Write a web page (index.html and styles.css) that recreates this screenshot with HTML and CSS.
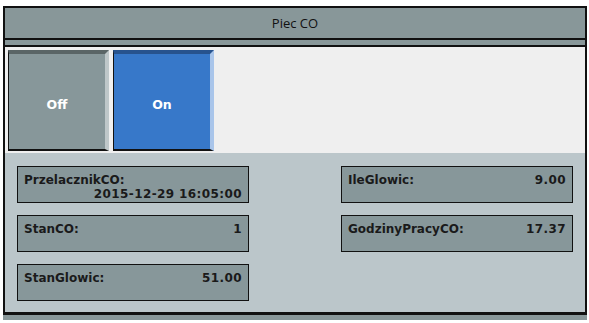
FILE: index.html
```html
<!doctype html>
<html lang="pl">
<head>
  <meta charset="utf-8"/>
  <title>Piec CO</title>
  <link rel="stylesheet" href="styles.css">
</head>
<body>
<div class="frame">
  <div class="header">Piec CO</div>
  <div class="strip"></div>
  <div class="switches">
    <button class="sw sw-off">Off</button>
    <button class="sw sw-on">On</button>
  </div>
  <div class="values">
    <div class="item"><span class="label">PrzelacznikCO:</span><span class="val">2015-12-29 16:05:00</span></div>
    <div class="item"><span class="label">IleGlowic:</span><span class="val">9.00</span></div>
    <div class="item"><span class="label">StanCO:</span><span class="val">1</span></div>
    <div class="item"><span class="label">GodzinyPracyCO:</span><span class="val">17.37</span></div>
    <div class="item"><span class="label">StanGlowic:</span><span class="val">51.00</span></div>
  </div>
</div>
<div class="footer"></div>
</body>
</html>
```

FILE: styles.css
```css
:root{
  --gray:#889799;--light:#efefef;--panel:#bbc6ca;--line:#111;
}
body{margin:0;background:#fff;font-family:'DejaVu Sans',Verdana,sans-serif;color:#1a1a1a}
.frame{width:584px;box-sizing:border-box;margin:6px 0 0 3px;
  border:2px solid var(--line);border-bottom:none}
.header{height:30px;line-height:30px;background:var(--gray);text-align:center;
  font-family:'Open Sans',sans-serif;font-size:13px;color:#111;
  border-bottom:2px solid var(--line)}
.strip{height:5px;background:var(--gray);border-bottom:2px solid var(--line)}
.switches{height:106px;box-sizing:border-box;background:var(--light);
  padding:3px 0 0 3px;display:flex;gap:4px}
.sw{width:101px;height:101px;box-sizing:border-box;padding:5px 0 0;margin:0;
  font-family:'DejaVu Sans',Verdana,sans-serif;font-size:12.5px;font-weight:700;color:#fff;
  border-style:solid;border-width:4px 4px 2px 1px;cursor:pointer}
.sw-off{background:#87979a;border-color:#5a6566 #bec7c9 var(--line) var(--line)}
.sw-on{background:#3778c9;border-color:#27538e #a9c5ea var(--line) var(--line)}
.values{height:159px;box-sizing:border-box;background:var(--panel);
  padding:13px 0 0 12px;display:grid;grid-template-columns:232px 232px;
  column-gap:92px;row-gap:12px;align-content:start}
.item{height:37px;box-sizing:border-box;background:#87979a;border:1px solid var(--line);
  padding:7px 6px 0 6px;display:flex;flex-wrap:wrap;justify-content:space-between;
  font-size:12px;font-weight:700;line-height:13px}
.val{margin-left:auto;letter-spacing:.4px}
.footer{width:584px;height:5px;margin-left:3px;background:var(--gray);
  border-top:3px solid var(--line)}
```
